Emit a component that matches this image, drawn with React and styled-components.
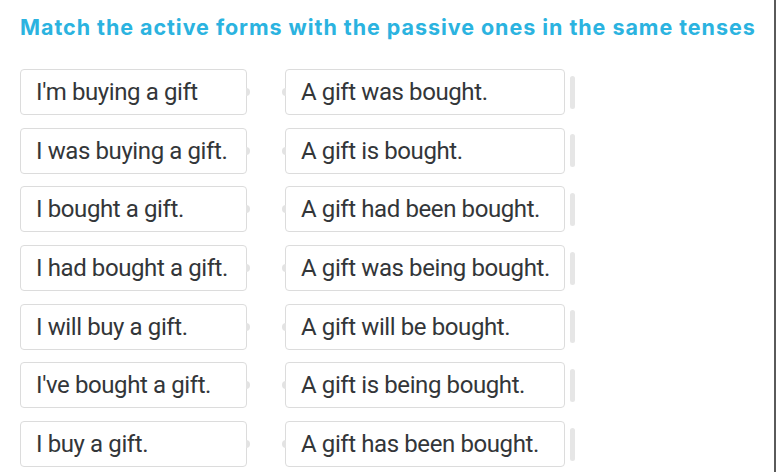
import React from "react";
import styled, { createGlobalStyle } from "styled-components";

const GlobalStyle = createGlobalStyle`
  html, body {
    margin: 0;
    padding: 0;
    background: #ffffff;
  }
  body {
    font-family: Roboto, "Liberation Sans", sans-serif;
  }
`;

const rows = [
  ["I'm buying a gift", "A gift was bought."],
  ["I was buying a gift.", "A gift is bought."],
  ["I bought a gift.", "A gift had been bought."],
  ["I had bought a gift.", "A gift was being bought."],
  ["I will buy a gift.", "A gift will be bought."],
  ["I've bought a gift.", "A gift is being bought."],
  ["I buy a gift.", "A gift has been bought."],
];

const Page = styled.div`
  width: 776px;
  height: 472px;
  box-sizing: border-box;
  padding: 12px 0 0 20px;
  border-right: 2px solid #5a5a5a;
  overflow: hidden;
`;

const Title = styled.h1`
  margin: 0 0 27px 0;
  font-family: Inter, "Open Sans", sans-serif;
  font-weight: 700;
  font-size: 21.5px;
  line-height: 30px;
  color: #2bb3e0;
  letter-spacing: 0.95px;
  white-space: nowrap;
`;

const List = styled.div`
  display: flex;
  flex-direction: column;
  gap: 12.7px;
`;

const Row = styled.div`
  display: flex;
  align-items: center;
`;

const Card = styled.div`
  position: relative;
  box-sizing: border-box;
  width: ${(p) => p.$width}px;
  height: 46px;
  border: 1px solid #dcdcdc;
  border-radius: 4px;
  background: #fff;
  display: flex;
  align-items: center;
  padding-left: 15px;
  font-size: 24px;
  color: #333639;
  letter-spacing: -0.4px;
  white-space: nowrap;
`;

const Knob = styled.span`
  position: absolute;
  top: 50%;
  ${(p) => (p.$side === "right" ? "right: -4px;" : "left: -4px;")}
  width: 4px;
  height: 8px;
  margin-top: -4px;
  background: #e3e3e3;
  border-radius: ${(p) => (p.$side === "right" ? "0 4px 4px 0" : "4px 0 0 4px")};
`;

const Spacer = styled.div`
  width: 38px;
`;

const Handle = styled.div`
  width: 5px;
  height: 33px;
  margin-left: 5px;
  border-radius: 3px;
  background: #e6e6e6;
`;

export default function App() {
  return (
    <>
      <GlobalStyle />
      <Page>
        <Title>Match the active forms with the passive ones in the same tenses</Title>
        <List>
          {rows.map(([active, passive]) => (
            <Row key={active}>
              <Card $width={227}>
                {active}
                <Knob $side="right" />
              </Card>
              <Spacer />
              <Card $width={280}>
                <Knob $side="left" />
                {passive}
              </Card>
              <Handle />
            </Row>
          ))}
        </List>
      </Page>
    </>
  );
}
